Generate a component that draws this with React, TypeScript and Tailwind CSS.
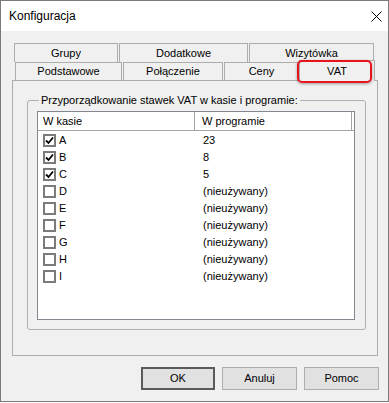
import { ReactNode } from 'react'

const font = { fontFamily: '"Liberation Sans", Arial, sans-serif' }

function Tab({ w, ml, children }: { w: string; ml: string; children: ReactNode }) {
  return (
    <div
      className={`${w} ${ml} h-full flex items-center justify-center border border-b-0 border-[#adadad] bg-[#f0f0f0] text-[11px] text-black`}
    >
      {children}
    </div>
  )
}

function Check({ on }: { on: boolean }) {
  return (
    <div className="w-[13px] h-[13px] border-2 border-[#7b7b7b] bg-white flex items-center justify-center">
      {on && (
        <svg width="9" height="9" viewBox="0 0 9 9">
          <path d="M1 4.5 L3.5 7 L8 1.5" stroke="#000" strokeWidth="1.8" fill="none" />
        </svg>
      )}
    </div>
  )
}

export default function App() {
  const rows = [
    { name: 'A', on: true, value: '23' },
    { name: 'B', on: true, value: '8' },
    { name: 'C', on: true, value: '5' },
    { name: 'D', on: false, value: '(nieużywany)' },
    { name: 'E', on: false, value: '(nieużywany)' },
    { name: 'F', on: false, value: '(nieużywany)' },
    { name: 'G', on: false, value: '(nieużywany)' },
    { name: 'H', on: false, value: '(nieużywany)' },
    { name: 'I', on: false, value: '(nieużywany)' },
  ]

  return (
    <div className="w-[389px] h-[403px] bg-white" style={font}>
      <div className="w-[389px] h-[402px] border border-[#7a7a7a] bg-[#f0f0f0] flex flex-col">
        {/* pasek tytułu */}
        <div className="h-[30px] bg-white flex items-center justify-between pl-[8px] pr-[5px]">
          <span className="text-[12px] text-black">Konfiguracja</span>
          <svg width="11" height="11" viewBox="0 0 11 11" className="mr-[1px]">
            <path d="M0.5 0.5 L10.5 10.5 M10.5 0.5 L0.5 10.5" stroke="#000" strokeWidth="1" />
          </svg>
        </div>

        {/* zakładki */}
        <div className="mt-[12px] pl-[13px]">
          <div className="flex h-[19px]">
            <Tab w="w-[104px]" ml="ml-0">Grupy</Tab>
            <Tab w="w-[129px]" ml="ml-[1px]">Dodatkowe</Tab>
            <Tab w="w-[125px]" ml="ml-[1px]">Wizytówka</Tab>
          </div>
          <div className="flex h-[18px] relative">
            <Tab w="w-[107px]" ml="ml-[1px]">Podstawowe</Tab>
            <Tab w="w-[100px]" ml="ml-[1px]">Połączenie</Tab>
            <Tab w="w-[75px]" ml="ml-[1px]">Ceny</Tab>
            <div className="relative w-[76px] ml-[0px] -mt-[2px] h-[21px] z-10 flex items-center justify-center border border-b-0 border-[#adadad] bg-[#f0f0f0] text-[11px] text-black">
              VAT
            </div>
            <div className="absolute left-[283px] -top-[2px] w-[75px] h-[23px] rounded-[5px] border-2 border-[#e8141c] z-20 shadow-[0_1px_3px_rgba(0,0,0,0.35)]" />
          </div>
        </div>

        {/* panel */}
        <div className="ml-[11px] w-[366px] h-[276px] border border-[#adadad] pt-[19px] pl-[14px] pr-[11px]">
          <div className="relative h-[230px] border border-[#b0b0b0] rounded-[3px] pt-[10px] pl-[9px] pr-[10px]">
            <span className="absolute -top-[8px] left-[11px] px-[2px] bg-[#f0f0f0] text-[11px] text-black leading-[14px]">
              Przyporządkowanie stawek VAT w kasie i programie:
            </span>
            <div className="h-[209px] border border-[#828790] bg-white">
              <div className="flex h-[19px] border-b border-[#a5a5a5] text-[11px] text-black">
                <div className="w-[157px] pl-[5px] flex items-center border-r border-[#a5a5a5]">W kasie</div>
                <div className="w-[157px] pl-[7px] flex items-center border-r border-[#a5a5a5]">W programie</div>
              </div>
              <div className="pt-[1px]">
                {rows.map((r) => (
                  <div key={r.name} className="flex h-[17px] items-center text-[11px] text-black">
                    <div className="w-[158px] flex items-center pl-[5px]">
                      <Check on={r.on} />
                      <span className="ml-[3px]">{r.name}</span>
                    </div>
                    <div className="pl-[7px]">{r.value}</div>
                  </div>
                ))}
              </div>
            </div>
          </div>
        </div>

        {/* przyciski */}
        <div className="mt-[11px] flex justify-end gap-[7px] pr-[9px]">
          <button className="w-[74px] h-[23px] border-2 border-[#5a5a5a] bg-[#e1e1e1] text-[11px] text-black">OK</button>
          <button className="w-[75px] h-[23px] border border-[#adadad] bg-[#e1e1e1] text-[11px] text-black">Anuluj</button>
          <button className="w-[75px] h-[23px] border border-[#adadad] bg-[#e1e1e1] text-[11px] text-black">Pomoc</button>
        </div>
      </div>
    </div>
  )
}
